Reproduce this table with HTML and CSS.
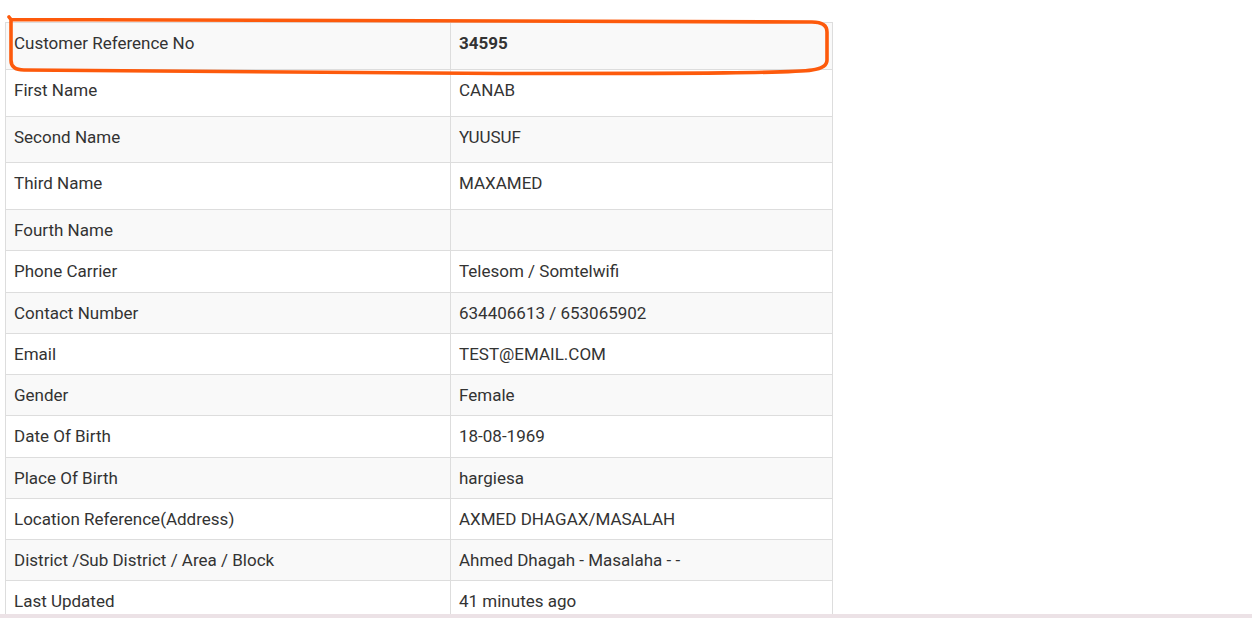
FILE: index.html
```html
<!DOCTYPE html>
<html lang="en">
<head>
<meta charset="utf-8">
<title>Customer Details</title>
<link rel="stylesheet" href="styles.css">
</head>
<body>
<div class="page">
  <table class="details">
    <tbody>
      <tr class="tall"><td class="label">Customer Reference No</td><td class="value"><strong>34595</strong></td></tr>
      <tr class="tall"><td class="label">First Name</td><td class="value">CANAB</td></tr>
      <tr class="tall"><td class="label">Second Name</td><td class="value">YUUSUF</td></tr>
      <tr class="tall"><td class="label">Third Name</td><td class="value">MAXAMED</td></tr>
      <tr><td class="label">Fourth Name</td><td class="value"></td></tr>
      <tr><td class="label">Phone Carrier</td><td class="value">Telesom / Somtelwifi</td></tr>
      <tr><td class="label">Contact Number</td><td class="value">634406613 / 653065902</td></tr>
      <tr><td class="label">Email</td><td class="value">TEST@EMAIL.COM</td></tr>
      <tr><td class="label">Gender</td><td class="value">Female</td></tr>
      <tr><td class="label">Date Of Birth</td><td class="value">18-08-1969</td></tr>
      <tr><td class="label">Place Of Birth</td><td class="value">hargiesa</td></tr>
      <tr><td class="label">Location Reference(Address)</td><td class="value">AXMED DHAGAX/MASALAH</td></tr>
      <tr><td class="label">District /Sub District / Area / Block</td><td class="value">Ahmed Dhagah - Masalaha - -</td></tr>
      <tr><td class="label">Last Updated</td><td class="value">41 minutes ago</td></tr>
    </tbody>
  </table>
  <svg class="annotation" width="840" height="80" viewBox="0 0 840 80" aria-hidden="true">
    <path d="M9 17 L11 19.5 C 200 20.5, 500 22.5, 812 22 Q 827 22 827 32 L 827 60 Q 827 68 812 70 C 795 73, 700 73.5, 500 73.5 C 300 73, 100 71, 24 70 Q 11 70 11 60 L 11 20" />
  </svg>
</div>
<div class="bottom-bar"></div>
</body>
</html>
```

FILE: styles.css
```css
html, body {
  margin: 0;
  padding: 0;
  background: #ffffff;
}

body {
  font-family: Roboto, "Liberation Sans", Arial, sans-serif;
  font-size: 17px;
  color: #333333;
  overflow: hidden;
}

.page {
  position: relative;
  padding: 22px 0 0 5px;
}

.details {
  border-collapse: collapse;
  width: 828px;
  border: 1px solid #dddddd;
}

.details td {
  border: 1px solid #dddddd;
  padding: 8px 8px;
  line-height: 24.25px;
  vertical-align: top;
  height: 24.25px;
}

.details tr:nth-child(odd) td {
  background: #f9f9f9;
}

.details .label {
  width: 428px;
}

.details .value strong {
  font-weight: 700;
}

.details tr.tall td {
  padding-bottom: 13.5px;
}

.annotation {
  position: absolute;
  top: 0;
  left: 0;
  pointer-events: none;
}

.annotation path {
  fill: none;
  stroke: #fd5a0c;
  stroke-width: 3.6;
  stroke-linecap: round;
  stroke-linejoin: round;
}

.bottom-bar {
  position: fixed;
  left: 0;
  right: 0;
  bottom: 0;
  height: 4px;
  background: #ece2e6;
}
```
